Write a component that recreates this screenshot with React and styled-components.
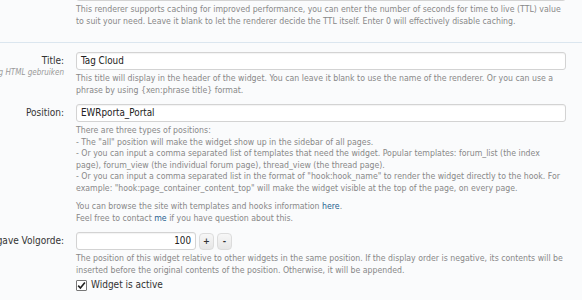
import React from 'react';
import styled, { createGlobalStyle } from 'styled-components';

const Global = createGlobalStyle`
  html, body { margin: 0; padding: 0; background: #fafbfc; }
  body { font-family: "DejaVu Sans Condensed", "DejaVu Sans", sans-serif; overflow: hidden; }
  * { box-sizing: border-box; }
`;

const Page = styled.div`
  width: 582px;
  height: 300px;
  overflow: hidden;
`;

const Form = styled.div`
  margin-top: -17px;
`;

const Section = styled.div`
  padding: ${p => p.$top || 0}px 0 ${p => p.$bottom || 0}px;
  border-top: ${p => (p.$divider ? '1px solid #dbe6ef' : 'none')};
`;

const Row = styled.div`
  display: grid;
  grid-template-columns: 64px 1fr;
  column-gap: 12px;
  padding-right: 16px;
  margin-top: ${p => p.$gap || 0}px;
`;

const LabelCol = styled.div`
  display: flex;
  flex-direction: column;
  align-items: flex-end;
  min-width: 0;
`;

const Label = styled.div`
  white-space: nowrap;
  font-size: 10px;
  line-height: 18px;
  color: #333;
`;

const Hint = styled.div`
  white-space: nowrap;
  font-size: 8px;
  font-style: italic;
  color: #999;
  line-height: 9px;
  margin-top: -2px;
`;

const Content = styled.div`
  min-width: 0;
`;

const TextInput = styled.div`
  height: 18px;
  width: ${p => p.$width || '100%'};
  background: #fff;
  border: 1px solid #d3d3d3;
  border-radius: 3px;
  box-shadow: inset 0 1px 1px rgba(0, 0, 0, 0.05);
  font-size: 9.8px;
  line-height: 16px;
  color: #222;
  padding: 0 4px;
  text-align: ${p => (p.$right ? 'right' : 'left')};
  white-space: nowrap;
  overflow: hidden;
`;

const SpinRow = styled.div`
  display: flex;
  align-items: center;
  gap: 2px;
`;

const SpinButton = styled.div`
  width: 15px;
  height: 17px;
  margin-left: 1px;
  border: 1px solid #dcdcdc;
  border-radius: 4px;
  background: linear-gradient(#f7f7f7, #e6e6e6);
  font-size: 9px;
  line-height: 15px;
  text-align: center;
  color: #333;
  font-weight: bold;
`;

const Explain = styled.div`
  margin-top: 3px;
  font-size: 8.7px;
  line-height: 11.5px;
  color: #888;
  white-space: nowrap;
`;

const Para = styled.p`
  margin: 0;
  & + & { margin-top: 7px; }
`;

const Link = styled.a`
  color: #1f5f8f;
  text-decoration: none;
`;

const CheckRow = styled.label`
  display: flex;
  align-items: center;
  gap: 4px;
  margin-top: 3px;
  font-size: 10px;
  line-height: 12px;
  color: #333;
`;

const Box = styled.span`
  width: 11px;
  height: 11px;
  border: 1px solid #777;
  border-radius: 1px;
  background: #fff;
  display: inline-flex;
  align-items: center;
  justify-content: center;
`;

export default function App() {
  return (
    <Page>
      <Global />
      <Form>
        <Section $bottom={15}>
          <Row>
            <LabelCol />
            <Content>
              <TextInput />
              <Explain>
                This renderer supports caching for improved performance, you can enter the number of seconds for time to live (TTL) value<br />
                to suit your need. Leave it blank to let the renderer decide the TTL itself. Enter 0 will effectively disable caching.
              </Explain>
            </Content>
          </Row>
        </Section>
        <Section $divider $top={9}>
          <Row>
            <LabelCol>
              <Label>Title:</Label>
              <Hint>Je mag HTML gebruiken</Hint>
            </LabelCol>
            <Content>
              <TextInput>Tag Cloud</TextInput>
              <Explain>
                This title will display in the header of the widget. You can leave it blank to use the name of the renderer. Or you can use a<br />
                phrase by using {'{xen:phrase title}'} format.
              </Explain>
            </Content>
          </Row>
          <Row $gap={8}>
            <LabelCol>
              <Label>Position:</Label>
            </LabelCol>
            <Content>
              <TextInput>EWRporta_Portal</TextInput>
              <Explain>
                <Para>
                  There are three types of positions:<br />
                  - The "all" position will make the widget show up in the sidebar of all pages.<br />
                  - Or you can input a comma separated list of templates that need the widget. Popular templates: forum_list (the index<br />
                  page), forum_view (the individual forum page), thread_view (the thread page).<br />
                  - Or you can input a comma separated list in the format of "hook:hook_name" to render the widget directly to the hook. For<br />
                  example: "hook:page_container_content_top" will make the widget visible at the top of the page, on every page.
                </Para>
                <Para>
                  You can browse the site with templates and hooks information <Link>here</Link>.<br />
                  Feel free to contact <Link>me</Link> if you have question about this.
                </Para>
              </Explain>
            </Content>
          </Row>
          <Row $gap={8}>
            <LabelCol>
              <Label>Weergave Volgorde:</Label>
            </LabelCol>
            <Content>
              <SpinRow>
                <TextInput $width="120px" $right>100</TextInput>
                <SpinButton>+</SpinButton>
                <SpinButton>-</SpinButton>
              </SpinRow>
              <Explain>
                The position of this widget relative to other widgets in the same position. If the display order is negative, its contents will be<br />
                inserted before the original contents of the position. Otherwise, it will be appended.
              </Explain>
              <CheckRow>
                <Box>
                  <svg width="9" height="9" viewBox="0 0 9 9">
                    <path d="M1.2 4.6 L3.4 7 L7.9 1.4" fill="none" stroke="#222" strokeWidth="1.6" />
                  </svg>
                </Box>
                Widget is active
              </CheckRow>
            </Content>
          </Row>
        </Section>
      </Form>
    </Page>
  );
}
